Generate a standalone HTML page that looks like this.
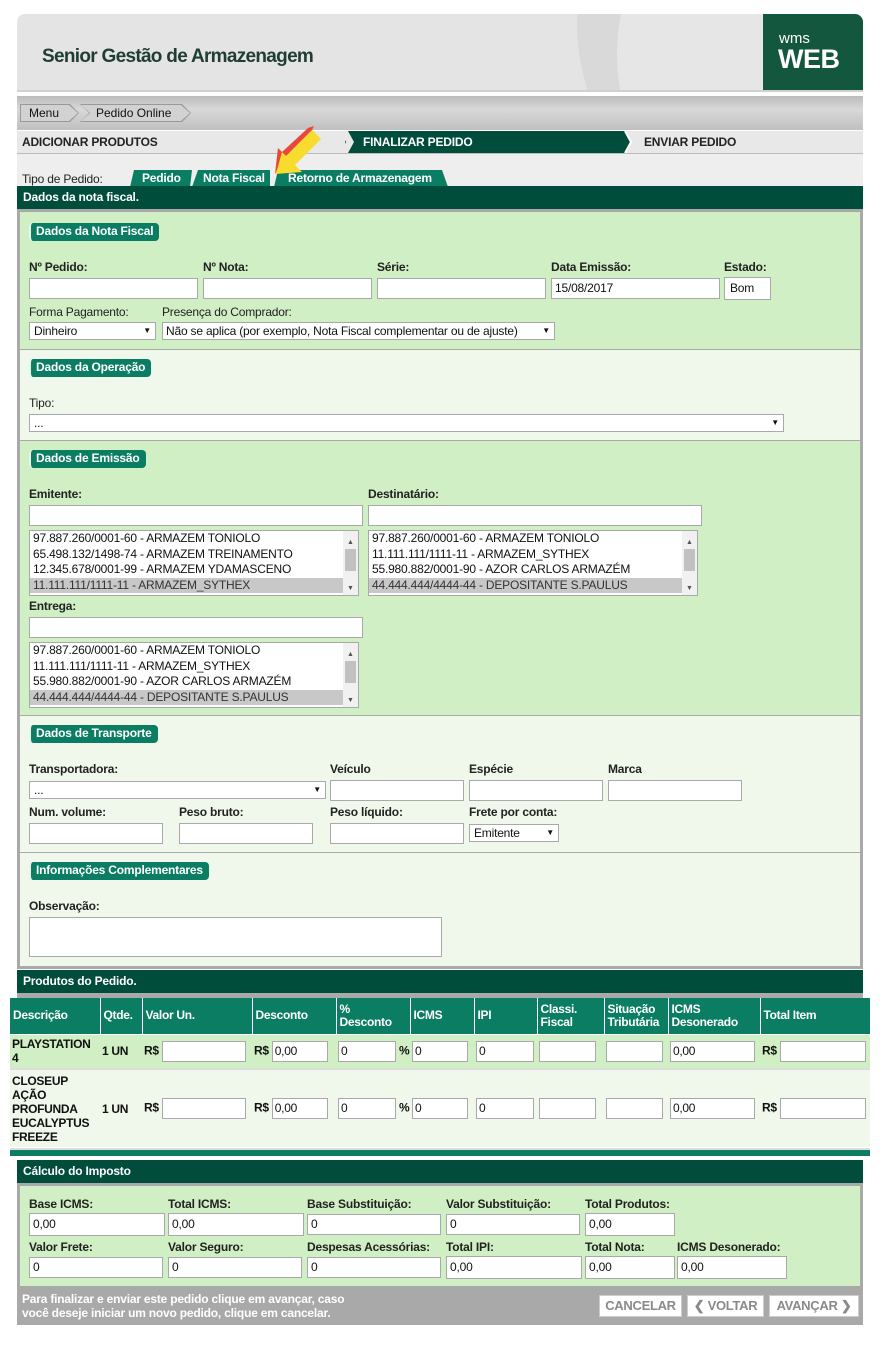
<!DOCTYPE html>
<html><head><meta charset="utf-8"><style>
*{box-sizing:border-box;margin:0;padding:0}
body{width:888px;height:1352px;background:#fff;font-family:"Liberation Sans",Arial,sans-serif;font-size:12px;color:#111;position:relative;overflow:hidden}
.a{position:absolute}
.l{position:absolute;font-size:12px;font-weight:bold;color:#222;white-space:nowrap;letter-spacing:-0.2px}
.n{font-weight:normal}
.i{position:absolute;background:#fff;border:1px solid #a9a9a9;height:21px;font-size:12px;line-height:19px;padding-left:3px;white-space:nowrap;letter-spacing:-0.2px}
.s{position:absolute;background:#fff;border:1px solid #a9a9a9;height:18px;font-size:12px;line-height:16px;padding-left:4px;white-space:nowrap;letter-spacing:-0.2px}
.s:after{content:"▼";position:absolute;right:4px;top:0;font-size:8px}
.pill{position:absolute;background:#0a7d62;color:#fff;font-weight:bold;font-size:12px;height:18px;line-height:17px;padding:0 6px 0 5px;border-radius:4px;border-left:2px solid #e8f3ea;white-space:nowrap;letter-spacing:-0.2px}
.bar{position:absolute;background:#004d3c;color:#fff;font-weight:bold;font-size:12px;padding-left:6px;letter-spacing:-0.2px}
.lb{position:absolute;background:#fff;border:1px solid #a9a9a9;font-size:12px;line-height:15.5px;overflow:hidden;letter-spacing:-0.2px}
.lb div{padding-left:3px;height:15.5px;white-space:nowrap}
.lb .sel{background:#c8c8c8;color:#333}
.lb .sb{position:absolute;right:0;top:0;width:15px;height:100%;background:#f1f1f1}
.lb .sb i{position:absolute;left:2px;top:18px;width:11px;height:22px;background:#c1c1c1}
.lb .sb b{position:absolute;left:4px;font-size:7px;color:#555;font-weight:normal}
th{background:#0a7d62;color:#fff;text-align:left;font-size:12px;font-weight:bold;padding:0 3px;border-right:1px solid #fff;line-height:13px;letter-spacing:-0.3px}
td{font-size:12px;font-weight:bold;padding:0 2px;letter-spacing:-0.3px;white-space:nowrap}
td .ti{display:inline-block;background:#fff;border:1px solid #a9a9a9;height:21px;line-height:19px;padding-left:2px;vertical-align:middle;font-weight:normal}
.btn{position:absolute;background:#fff;border:1px solid #ccc;color:#8a8a8a;font-weight:bold;font-size:13px;height:22px;line-height:20px;text-align:center;letter-spacing:-0.3px}
.crumb{position:absolute;top:104px;height:18px;background:#999;clip-path:polygon(0 0,calc(100% - 9px) 0,100% 50%,calc(100% - 9px) 100%,0 100%,0 0)}
.crumb span{position:absolute;left:1px;top:1px;right:1px;bottom:1px;background:#d2d2d2;clip-path:polygon(0 0,calc(100% - 9px) 0,100% 50%,calc(100% - 9px) 100%,0 100%,0 0);font-size:12px;line-height:16px}
</style></head><body>

<!-- header -->
<div class="a" style="left:17px;top:14px;width:846px;height:78px;border-radius:8px 8px 0 0;background:#e4e4e4;overflow:hidden;border-bottom:2px solid #d0d0d0">
 <div class="a" style="left:560px;top:-200px;width:420px;height:420px;border-radius:50%;background:#d9d9d9"></div>
 <div class="a" style="left:600px;top:-160px;width:400px;height:400px;border-radius:50%;background:#e6e6e6"></div>
 <div class="a" style="left:25px;top:32px;font-size:19px;font-weight:bold;color:#1f3d33;letter-spacing:-0.7px">Senior Gestão de Armazenagem</div>
 <div class="a" style="left:746px;top:0;width:100px;height:78px;background:#14573f;color:#fff">
  <div class="a" style="left:16px;top:17px;font-size:15px;line-height:15px">wms</div>
  <div class="a" style="left:15px;top:31px;font-size:27px;font-weight:bold;line-height:28px;letter-spacing:-0.5px">WEB</div>
 </div>
</div>
<!-- breadcrumb -->
<div class="a" style="left:17px;top:96px;width:846px;height:34px;background:linear-gradient(#bcbcbc,#d8d8d8 40%,#c0c0c0);"></div>
<div class="crumb" style="left:20px;width:59px"><span style="padding-left:8px">Menu</span></div>
<div class="crumb" style="left:80px;width:111px;clip-path:polygon(0 0,calc(100% - 9px) 0,100% 50%,calc(100% - 9px) 100%,0 100%,9px 50%)"><span style="padding-left:15px;clip-path:polygon(0 0,calc(100% - 9px) 0,100% 50%,calc(100% - 9px) 100%,0 100%,9px 50%)">Pedido Online</span></div>
<!-- steps -->
<div class="a" style="left:17px;top:131px;width:846px;height:23px;background:#e8e8e8;border-bottom:1px solid #bbb"></div>
<div class="l" style="left:22px;top:135px;">ADICIONAR PRODUTOS</div>
<div class="a" style="left:345px;top:131px;width:280px;height:22px;background:#004d3c"></div>
<svg class="a" style="left:340px;top:131px" width="16" height="22"><polygon points="0,0 8,0 14,11 8,22 0,22 6,11" fill="#e8e8e8"/></svg>
<svg class="a" style="left:620px;top:131px" width="16" height="22"><polygon points="0,0 5,0 11,11 5,22 0,22" fill="#004d3c"/><polyline points="5,0 11,11 5,22" stroke="#fff" stroke-width="2" fill="none"/></svg>
<div class="l" style="left:363px;top:135px;color:#fff">FINALIZAR PEDIDO</div>
<div class="l" style="left:644px;top:135px;">ENVIAR PEDIDO</div>
<!-- tipo -->
<div class="a" style="left:17px;top:154px;width:846px;height:33px;background:#eeeeee"></div>
<div class="l n" style="left:22px;top:172px;">Tipo de Pedido:</div>
<svg class="a" style="left:130px;top:170px" width="320" height="17">
 <polygon points="4,0 62,0 60,17 0,17" fill="#0a7d62"/>
 <polygon points="68,0 140,0 140,17 62,17" fill="#0a7d62"/>
 <polygon points="148,0 312,0 318,17 144,17" fill="#0a7d62"/>
</svg>
<div class="l" style="left:142px;top:171px;color:#fff">Pedido</div>
<div class="l" style="left:203px;top:171px;color:#fff">Nota Fiscal</div>
<div class="l" style="left:288px;top:171px;color:#fff">Retorno de Armazenagem</div>
<svg class="a" style="left:268px;top:124px" width="64" height="56">
 <polygon points="7,50 10,24 18,32 44,6 53,15 27,41 34,48" fill="#f7dc2e"/>
 <polygon points="7,50 10,24 14,28 9,46" fill="#e8473c"/>
 <polygon points="14,28 18,32 44,6 46,2 40,4" fill="#e8473c"/>
</svg>
<div class="bar" style="left:17px;top:186px;width:846px;height:23px;line-height:22px">Dados da nota fiscal.</div>

<!-- main box -->
<div class="a" style="left:17px;top:209px;width:846px;height:760px;background:#a9a9a9"></div>
<div class="a" style="left:20px;top:212px;width:840px;height:137px;background:#d1efc4"></div>
<div class="a" style="left:20px;top:350px;width:840px;height:90px;background:#eff8ea"></div>
<div class="a" style="left:20px;top:441px;width:840px;height:274px;background:#d1efc4"></div>
<div class="a" style="left:20px;top:716px;width:840px;height:136px;background:#eff8ea"></div>
<div class="a" style="left:20px;top:853px;width:840px;height:113px;background:#eff8ea"></div>

<!-- s1 -->
<div class="pill" style="left:29px;top:223px">Dados da Nota Fiscal</div>
<div class="l" style="left:29px;top:260px">Nº Pedido:</div>
<div class="l" style="left:203px;top:260px">Nº Nota:</div>
<div class="l" style="left:377px;top:260px">Série:</div>
<div class="l" style="left:551px;top:260px">Data Emissão:</div>
<div class="l" style="left:724px;top:260px">Estado:</div>
<div class="i" style="left:29px;top:278px;width:169px"></div>
<div class="i" style="left:203px;top:278px;width:169px"></div>
<div class="i" style="left:377px;top:278px;width:169px"></div>
<div class="i" style="left:551px;top:278px;width:169px">15/08/2017</div>
<div class="i" style="left:724px;top:277px;width:47px;height:23px;line-height:21px;padding-left:5px">Bom</div>
<div class="l n" style="left:29px;top:305px">Forma Pagamento:</div>
<div class="l n" style="left:162px;top:305px">Presença do Comprador:</div>
<div class="s" style="left:29px;top:322px;width:127px">Dinheiro</div>
<div class="s" style="left:162px;top:322px;width:393px;padding-left:3px">Não se aplica (por exemplo, Nota Fiscal complementar ou de ajuste)</div>

<!-- s2 -->
<div class="pill" style="left:29px;top:359px">Dados da Operação</div>
<div class="l n" style="left:29px;top:396px">Tipo:</div>
<div class="s" style="left:29px;top:414px;width:755px">...</div>

<!-- s3 -->
<div class="pill" style="left:29px;top:450px">Dados de Emissão</div>
<div class="l" style="left:29px;top:487px">Emitente:</div>
<div class="l" style="left:368px;top:487px">Destinatário:</div>
<div class="i" style="left:29px;top:505px;width:334px"></div>
<div class="i" style="left:368px;top:505px;width:334px"></div>
<div class="lb" style="left:29px;top:530px;width:330px;height:66px">
 <div>97.887.260/0001-60 - ARMAZEM TONIOLO</div><div>65.498.132/1498-74 - ARMAZEM TREINAMENTO</div><div>12.345.678/0001-99 - ARMAZEM YDAMASCENO</div><div class="sel">11.111.111/1111-11 - ARMAZEM_SYTHEX</div>
 <span class="sb"><b style="top:4px">▲</b><i></i><b style="top:50px">▼</b></span></div>
<div class="lb" style="left:368px;top:530px;width:330px;height:66px">
 <div>97.887.260/0001-60 - ARMAZEM TONIOLO</div><div>11.111.111/1111-11 - ARMAZEM_SYTHEX</div><div>55.980.882/0001-90 - AZOR CARLOS ARMAZÉM</div><div class="sel">44.444.444/4444-44 - DEPOSITANTE S.PAULUS</div>
 <span class="sb"><b style="top:4px">▲</b><i></i><b style="top:50px">▼</b></span></div>
<div class="l" style="left:29px;top:599px">Entrega:</div>
<div class="i" style="left:29px;top:617px;width:334px"></div>
<div class="lb" style="left:29px;top:642px;width:330px;height:66px">
 <div>97.887.260/0001-60 - ARMAZEM TONIOLO</div><div>11.111.111/1111-11 - ARMAZEM_SYTHEX</div><div>55.980.882/0001-90 - AZOR CARLOS ARMAZÉM</div><div class="sel">44.444.444/4444-44 - DEPOSITANTE S.PAULUS</div>
 <span class="sb"><b style="top:4px">▲</b><i></i><b style="top:50px">▼</b></span></div>

<!-- s4 -->
<div class="pill" style="left:29px;top:725px">Dados de Transporte</div>
<div class="l" style="left:29px;top:762px">Transportadora:</div>
<div class="l" style="left:330px;top:762px">Veículo</div>
<div class="l" style="left:469px;top:762px">Espécie</div>
<div class="l" style="left:608px;top:762px">Marca</div>
<div class="s" style="left:29px;top:781px;width:297px">...</div>
<div class="i" style="left:330px;top:780px;width:134px"></div>
<div class="i" style="left:469px;top:780px;width:134px"></div>
<div class="i" style="left:608px;top:780px;width:134px"></div>
<div class="l" style="left:29px;top:805px">Num. volume:</div>
<div class="l" style="left:179px;top:805px">Peso bruto:</div>
<div class="l" style="left:330px;top:805px">Peso líquido:</div>
<div class="l" style="left:469px;top:805px">Frete por conta:</div>
<div class="i" style="left:29px;top:823px;width:134px"></div>
<div class="i" style="left:179px;top:823px;width:134px"></div>
<div class="i" style="left:330px;top:823px;width:134px"></div>
<div class="s" style="left:469px;top:824px;width:90px">Emitente</div>

<!-- s5 -->
<div class="pill" style="left:29px;top:862px">Informações Complementares</div>
<div class="l" style="left:29px;top:899px">Observação:</div>
<div class="i" style="left:29px;top:917px;width:413px;height:40px"></div>

<div class="bar" style="left:17px;top:970px;width:846px;height:23px;line-height:22px">Produtos do Pedido.</div>
<div class="a" style="left:17px;top:993px;width:846px;height:5px;background:#a9a9a9"></div>

<table class="a" style="left:10px;top:998px;width:860px;border-collapse:collapse;table-layout:fixed">
<colgroup><col style="width:90px"><col style="width:42px"><col style="width:110px"><col style="width:84px"><col style="width:74px"><col style="width:64px"><col style="width:63px"><col style="width:67px"><col style="width:64px"><col style="width:92px"><col style="width:110px"></colgroup>
<tr style="height:36px"><th>Descrição</th><th>Qtde.</th><th>Valor Un.</th><th>Desconto</th><th>%<br>Desconto</th><th>ICMS</th><th>IPI</th><th>Classi.<br>Fiscal</th><th>Situação<br>Tributária</th><th>ICMS<br>Desonerado</th><th>Total Item</th></tr>
<tr style="height:35px;background:#d1efc4;border-top:1px solid #fff"><td style="white-space:normal;line-height:14px">PLAYSTATION 4</td><td>1 UN</td><td>R$ <span class="ti" style="width:84px"></span></td><td>R$ <span class="ti" style="width:56px">0,00</span></td><td><span class="ti" style="width:58px">0</span> %</td><td><span class="ti" style="width:56px">0</span></td><td><span class="ti" style="width:58px">0</span></td><td><span class="ti" style="width:57px"></span></td><td><span class="ti" style="width:57px"></span></td><td><span class="ti" style="width:85px">0,00</span></td><td>R$ <span class="ti" style="width:86px"></span></td></tr>
<tr style="height:78px;background:#eff8ea;border-top:2px solid #ddd"><td style="white-space:normal;line-height:14px">CLOSEUP AÇÃO PROFUNDA EUCALYPTUS FREEZE</td><td>1 UN</td><td>R$ <span class="ti" style="width:84px"></span></td><td>R$ <span class="ti" style="width:56px">0,00</span></td><td><span class="ti" style="width:58px">0</span> %</td><td><span class="ti" style="width:56px">0</span></td><td><span class="ti" style="width:58px">0</span></td><td><span class="ti" style="width:57px"></span></td><td><span class="ti" style="width:57px"></span></td><td><span class="ti" style="width:85px">0,00</span></td><td>R$ <span class="ti" style="width:86px"></span></td></tr>
</table>
<div class="a" style="left:10px;top:1148px;width:860px;height:2px;background:#ddd"></div>
<div class="a" style="left:10px;top:1150px;width:860px;height:6px;background:#0a7d62"></div>

<div class="bar" style="left:17px;top:1160px;width:846px;height:23px;line-height:22px">Cálculo do Imposto</div>
<div class="a" style="left:17px;top:1183px;width:846px;height:142px;background:#a9a9a9"></div>
<div class="a" style="left:20px;top:1186px;width:840px;height:100px;background:#d1efc4"></div>
<div class="l" style="left:29px;top:1197px">Base ICMS:</div>
<div class="l" style="left:168px;top:1197px">Total ICMS:</div>
<div class="l" style="left:307px;top:1197px">Base Substituição:</div>
<div class="l" style="left:446px;top:1197px">Valor Substituição:</div>
<div class="l" style="left:585px;top:1197px">Total Produtos:</div>
<div class="i" style="left:29px;top:1213px;width:136px;height:23px;line-height:21px">0,00</div>
<div class="i" style="left:168px;top:1213px;width:136px;height:23px;line-height:21px">0,00</div>
<div class="i" style="left:307px;top:1214px;width:134px">0</div>
<div class="i" style="left:446px;top:1214px;width:134px">0</div>
<div class="i" style="left:585px;top:1213px;width:90px;height:23px;line-height:21px">0,00</div>
<div class="l" style="left:29px;top:1240px">Valor Frete:</div>
<div class="l" style="left:168px;top:1240px">Valor Seguro:</div>
<div class="l" style="left:307px;top:1240px">Despesas Acessórias:</div>
<div class="l" style="left:446px;top:1240px">Total IPI:</div>
<div class="l" style="left:585px;top:1240px">Total Nota:</div>
<div class="l" style="left:677px;top:1240px">ICMS Desonerado:</div>
<div class="i" style="left:29px;top:1257px;width:134px">0</div>
<div class="i" style="left:168px;top:1257px;width:134px">0</div>
<div class="i" style="left:307px;top:1257px;width:134px">0</div>
<div class="i" style="left:446px;top:1256px;width:136px;height:23px;line-height:21px">0,00</div>
<div class="i" style="left:585px;top:1256px;width:90px;height:23px;line-height:21px">0,00</div>
<div class="i" style="left:677px;top:1256px;width:110px;height:23px;line-height:21px">0,00</div>
<div class="l" style="left:22px;top:1292px;color:#fff;line-height:14px">Para finalizar e enviar este pedido clique em avançar, caso<br>você deseje iniciar um novo pedido, clique em cancelar.</div>
<div class="btn" style="left:599px;top:1295px;width:83px">CANCELAR</div>
<div class="btn" style="left:687px;top:1295px;width:77px">❮ VOLTAR</div>
<div class="btn" style="left:769px;top:1295px;width:90px">AVANÇAR ❯</div>
</body></html>
